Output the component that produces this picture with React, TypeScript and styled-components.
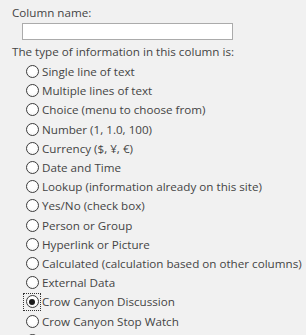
import styled, { createGlobalStyle } from "styled-components";

const GlobalStyle = createGlobalStyle`
  html, body {
    margin: 0;
    padding: 0;
    background: #f1f1f1;
  }
`;

const Panel = styled.div`
  width: 306px;
  height: 335px;
  overflow: hidden;
  background: #f1f1f1;
  color: #444444;
  font-family: "Open Sans", "Liberation Sans", sans-serif;
  font-size: 11.65px;
  padding: 4px 0 0 12px;
  box-sizing: border-box;
`;

const Label = styled.div`
  line-height: 18px;
`;

const NameInput = styled.input`
  display: block;
  width: 211px;
  height: 17px;
  box-sizing: border-box;
  margin: 1px 0 3px 10px;
  border: 1px solid #ababab;
  background: #ffffff;
  outline: none;
  padding: 0 3px;
`;

const OptionList = styled.div`
  display: flex;
  flex-direction: column;
  padding: 1px 0 0 13px;
`;

const Option = styled.label`
  display: flex;
  align-items: center;
  height: 19.2px;
  white-space: nowrap;
  cursor: default;
`;

const RadioWrap = styled.span<{ focused?: boolean }>`
  display: flex;
  align-items: center;
  justify-content: center;
  width: 18px;
  height: 18px;
  margin-left: -2px;
  border: 1px dotted ${(p) => (p.focused ? "#333333" : "transparent")};
  box-sizing: border-box;
`;

const Radio = styled.span<{ checked?: boolean }>`
  position: relative;
  width: 13px;
  height: 13px;
  border-radius: 50%;
  box-sizing: border-box;
  border: 1px solid #3c3c3c;
  background: radial-gradient(circle at 50% 40%, #ffffff 40%, #eeeeee 100%);
  &::after {
    content: "";
    display: ${(p) => (p.checked ? "block" : "none")};
    position: absolute;
    left: 2.5px;
    top: 2.5px;
    width: 6px;
    height: 6px;
    border-radius: 50%;
    background: #1a1a1a;
  }
`;

const OptionText = styled.span`
  margin-left: 1px;
`;

const options = [
  "Single line of text",
  "Multiple lines of text",
  "Choice (menu to choose from)",
  "Number (1, 1.0, 100)",
  "Currency ($, ¥, €)",
  "Date and Time",
  "Lookup (information already on this site)",
  "Yes/No (check box)",
  "Person or Group",
  "Hyperlink or Picture",
  "Calculated (calculation based on other columns)",
  "External Data",
  "Crow Canyon Discussion",
  "Crow Canyon Stop Watch",
  "Crow Canyon Form",
];

const App = () => {
  const selected = "Crow Canyon Discussion";
  return (
    <>
      <GlobalStyle />
      <Panel>
        <Label>Column name:</Label>
        <NameInput type="text" />
        <Label>The type of information in this column is:</Label>
        <OptionList>
          {options.map((o) => (
            <Option key={o}>
              <RadioWrap focused={o === selected}>
                <Radio checked={o === selected} />
              </RadioWrap>
              <OptionText>{o}</OptionText>
            </Option>
          ))}
        </OptionList>
      </Panel>
    </>
  );
};

export default App;
